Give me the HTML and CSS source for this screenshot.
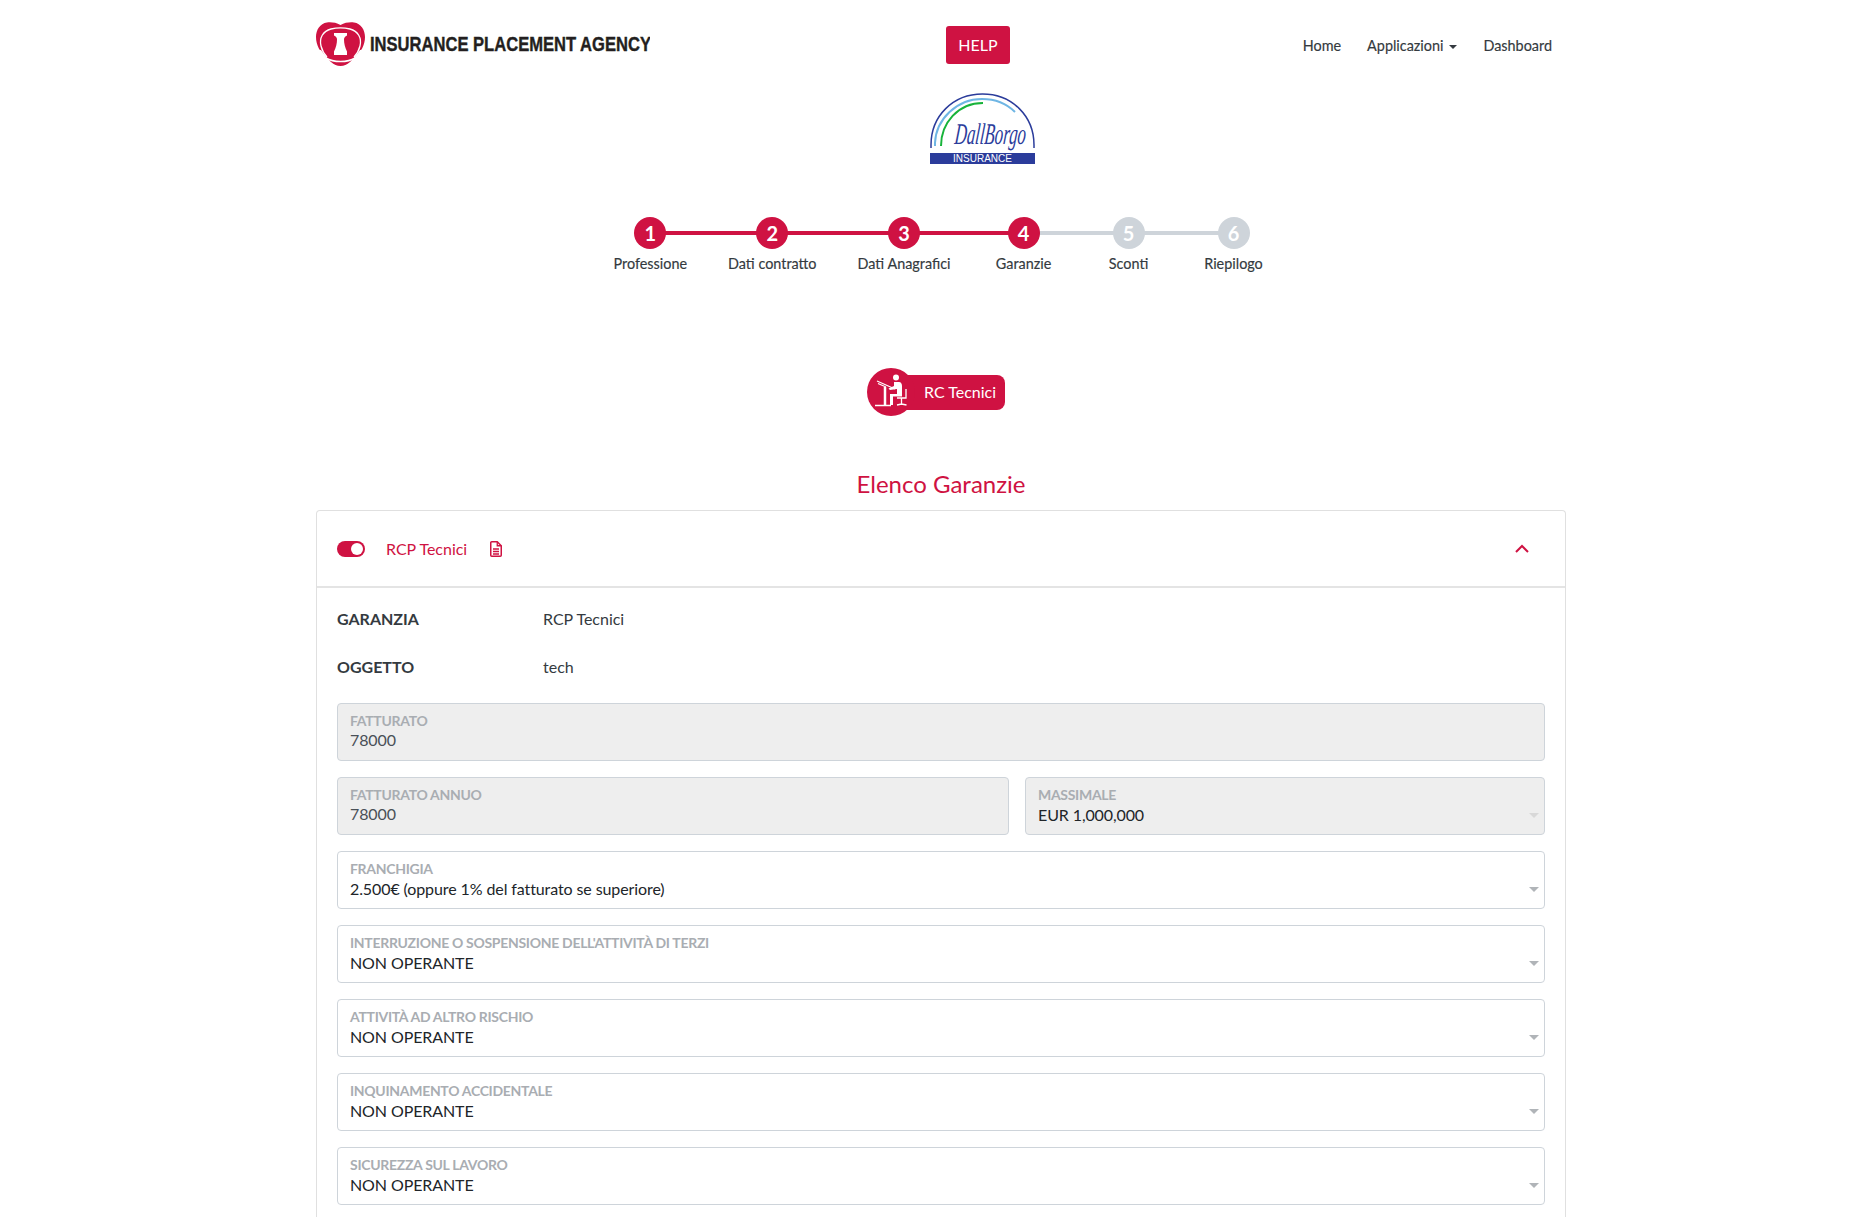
FILE: index.html
```html
<!DOCTYPE html>
<html>
<head>
    <title>Elenco Garanzie</title>
    <link rel="stylesheet" href="styles.css">
</head>
<body>
    <div class="page">
        <nav class="navbar">
            <a class="brand" href="#">
                <svg class="brand-logo" width="334" height="44" viewBox="0 0 334 44">
                    <path fill="#cf1242" d="M24.500 3C20 .5 15 0 11 .5 4 1.500 0 8 0 15c0 8 4 15 10 20l5 5c3 2.500 6 4 9.500 4s6.500-1.500 9.500-4l5-5c6-5 10-12 10-20C49 8 45 1.500 38 .5 34 0 29 .5 24.500 3z"/>
                    <path fill="none" stroke="#fff" stroke-width="1.300" d="M5 24C3 16 7 9 15 7c6-1.500 13-1.500 19 0 8 2 12 9 10 17-1 4-3 8-6 11M5 24c1 4 3 8 6 11"/>
                    <path fill="none" stroke="#fff" stroke-width="1.500" d="M10 36c4 2.500 9 3.500 14.500 3.500S35 38.500 39 36"/>
                    <path fill="#fff" d="M0 28h5l6 8 4 5-3 3H0zM49 28h-5l-6 8-4 5 3 3h12z"/>
                    <path fill="#fff" d="M18 11h13v2.500c-2 1-3 2-3 4 0 4 1 8 3 12V33H18v-3.500c2-4 3-8 3-12 0-2-1-3-3-4z"/>
                    <text class="brand-text" transform="translate(54 29) scale(.789 1)">INSURANCE PLACEMENT AGENCY</text>
                </svg>
            </a>
            <a class="btn-help" href="#">HELP</a>
            <ul class="nav">
                <li><a href="#">Home</a></li>
                <li><a class="dropdown" href="#">Applicazioni</a></li>
                <li><a href="#">Dashboard</a></li>
            </ul>
        </nav>

        <div class="partner">
            <svg width="105" height="71" viewBox="0 0 105 71">
                <path fill="none" stroke="#2b3c9b" stroke-width="1.500" d="M1 55V52C1 23 23 1 52.500 1S104 23 104 52v3"/>
                <path fill="none" stroke="#6fb6e4" stroke-width="2" d="M5 53V50C6 26 27 6 52 6c14 0 25 5 33 13"/>
                <path fill="none" stroke="#17b33a" stroke-width="2" d="M11 53C11 30 28 10 53 10"/>
                <text class="partner-sign" transform="translate(24 51) scale(.56 1) skewX(-10)">DallBorgo</text>
                <rect x="0" y="60" width="105" height="11" fill="#2b3c9b"/>
                <text class="partner-name" x="52.500" y="69" text-anchor="middle">INSURANCE</text>
            </svg>
        </div>

        <div class="stepper">
            <div class="step done"><span class="step-num">1</span><span class="step-label">Professione</span></div>
            <div class="step done"><span class="step-num">2</span><span class="step-label">Dati contratto</span></div>
            <div class="step done"><span class="step-num">3</span><span class="step-label">Dati Anagrafici</span></div>
            <div class="step current"><span class="step-num">4</span><span class="step-label">Garanzie</span></div>
            <div class="step"><span class="step-num">5</span><span class="step-label">Sconti</span></div>
            <div class="step"><span class="step-num">6</span><span class="step-label">Riepilogo</span></div>
        </div>

        <div class="badge-row">
            <div class="badge">
                <span class="badge-icon">
                    <svg width="48" height="48" viewBox="0 0 48 48" fill="none" stroke="#fff">
                        <path stroke-width="1.200" d="M10 13l18 8M11 15.500l8 3.500"/>
                        <path stroke-width="2.500" d="M18 19v18"/>
                        <path stroke-width="1.500" d="M8 37.500h16"/>
                        <circle cx="29" cy="9.500" r="3" fill="#fff" stroke="none"/>
                        <path fill="#fff" stroke="none" d="M27 14h5c2 0 3 2 3 4v10.500h-9V37h-3V26h7v-5l-7 1-1.500-1.500 5.500-2.500z"/>
                        <path stroke-width="1.300" d="M39 21v9h-9M34.500 30v6.500M30 37l4.500-1 5 1"/>
                    </svg>
                </span>
                <span class="badge-text">RC Tecnici</span>
            </div>
        </div>

        <h2 class="section-title">Elenco Garanzie</h2>

        <div class="card">
            <div class="card-header">
                <span class="toggle"></span>
                <span class="card-title">RCP Tecnici</span>
                <svg class="doc-icon" width="12" height="16" viewBox="0 0 12 16" fill="none" stroke="#cf1242" stroke-width="1.500">
                    <path d="M.75 1.750a1 1 0 0 1 1-1h5.500l4 4v9.500a1 1 0 0 1-1 1h-8.500a1 1 0 0 1-1-1z"/>
                    <path d="M7.250 1v3.750h4M3 8h6M3 10.500h6M3 13h6" stroke-width="1.300"/>
                </svg>
                <svg class="chevron" width="14" height="9" viewBox="0 0 14 9" fill="none" stroke="#cf1242" stroke-width="2">
                    <path d="M1 8l6-6 6 6"/>
                </svg>
            </div>
            <div class="card-body">
                <div class="info-row"><span class="info-key">GARANZIA</span><span>RCP Tecnici</span></div>
                <div class="info-row"><span class="info-key">OGGETTO</span><span>tech</span></div>

                <div class="field disabled">
                    <label>FATTURATO</label>
                    <div class="field-value">78000</div>
                </div>
                <div class="field-row">
                    <div class="field disabled">
                        <label>FATTURATO ANNUO</label>
                        <div class="field-value">78000</div>
                    </div>
                    <div class="field disabled select">
                        <label>MASSIMALE</label>
                        <div class="field-value">EUR 1,000,000</div>
                    </div>
                </div>
                <div class="field select">
                    <label>FRANCHIGIA</label>
                    <div class="field-value">2.500€ (oppure 1% del fatturato se superiore)</div>
                </div>
                <div class="field select">
                    <label>INTERRUZIONE O SOSPENSIONE DELL'ATTIVITÀ DI TERZI</label>
                    <div class="field-value">NON OPERANTE</div>
                </div>
                <div class="field select">
                    <label>ATTIVITÀ AD ALTRO RISCHIO</label>
                    <div class="field-value">NON OPERANTE</div>
                </div>
                <div class="field select">
                    <label>INQUINAMENTO ACCIDENTALE</label>
                    <div class="field-value">NON OPERANTE</div>
                </div>
                <div class="field select">
                    <label>SICUREZZA SUL LAVORO</label>
                    <div class="field-value">NON OPERANTE</div>
                </div>
            </div>
        </div>
    </div>
</body>
</html>
```

FILE: styles.css
```css
html, body {
    margin: 0;
    padding: 0;
    background: #fff;
}
body {
    font-family: Lato, "Noto Sans", sans-serif;
    font-size: 16px;
    color: #343a40;
}
a {
    color: inherit;
    text-decoration: none;
}
.page {
    width: 1250px;
    height: 1217px;
    margin-left: 316px;
    overflow: hidden;
}

/* top bar */
.navbar {
    display: flex;
    align-items: center;
    justify-content: space-between;
    height: 88px;
}
.brand {
    display: block;
    height: 44px;
    margin-right: 16px;
}
.brand-text {
    font-family: "Liberation Sans", sans-serif;
    font-size: 21px;
    font-weight: bold;
    fill: #231f20;
    stroke: #231f20;
    stroke-width: .4px;
}
.btn-help {
    margin-top: 2px;
    padding: 0 12px;
    height: 38px;
    line-height: 38px;
    background: #cf1242;
    color: #fff;
    border-radius: 3px;
}
.nav {
    display: flex;
    list-style: none;
    margin: 2px 1px 0 0;
    padding: 0;
    font-size: 14.4px;
    -webkit-text-stroke: .15px #343a40;
}
.nav a {
    display: block;
    padding: 0 13px;
}
.dropdown::after {
    content: "";
    display: inline-block;
    margin-left: 6px;
    vertical-align: 2px;
    border-top: 4px solid #343a40;
    border-left: 4px solid transparent;
    border-right: 4px solid transparent;
}

/* partner logo */
.partner {
    margin: 5px 0 0 614px;
    height: 70px;
}
.partner svg {
    display: block;
}
.partner-sign {
    font-family: "Liberation Serif", serif;
    font-style: italic;
    font-size: 30px;
    fill: #2b3c9b;
}
.partner-name {
    font-family: "Liberation Sans", sans-serif;
    font-size: 10px;
    fill: #fff;
}

/* stepper */
.stepper {
    display: flex;
    justify-content: center;
    gap: 41px;
    margin: 54px 3px 0 0;
    font-size: 14.4px;
}
.step {
    position: relative;
    display: flex;
    flex-direction: column;
    align-items: center;
    min-width: 64px;
}
.step-num {
    position: relative;
    z-index: 1;
    width: 32px;
    height: 32px;
    line-height: 32px;
    text-align: center;
    border-radius: 50%;
    background: #ced4da;
    color: #fff;
    font-size: 20px;
    font-weight: 700;
}
.step-label {
    margin-top: 5px;
    line-height: 20px;
    -webkit-text-stroke: .15px #343a40;
}
/* connector: each step draws its half towards the neighbours */
.step::before, .step::after {
    content: "";
    position: absolute;
    top: 14px;
    height: 4px;
    background: #ced4da;
}
.step::before {
    left: 0;
    right: 50%;
}
.step::after {
    left: 50%;
    right: -41px;
}
.step:first-child::before, .step:last-child::after {
    display: none;
}
.step.done::before, .step.done::after, .step.current::before {
    background: #cf1242;
}
.step.done .step-num, .step.current .step-num {
    background: #cf1242;
}

/* section badge */
.badge-row {
    display: flex;
    justify-content: center;
    margin-top: 94px;
}
.badge {
    display: flex;
    align-items: center;
    height: 48px;
    margin-right: 10px;
}
.badge-icon {
    position: relative;
    z-index: 1;
    width: 48px;
    height: 48px;
    border-radius: 50%;
    background: #cf1242;
}
.badge-text {
    height: 35px;
    line-height: 33px;
    margin-left: -10px;
    padding: 0 9px 0 19px;
    background: #cf1242;
    color: #fff;
    border-radius: 0 8px 8px 0;
}

.section-title {
    margin: 48px 0 0;
    text-align: center;
    font-size: 24px;
    font-weight: 400;
    line-height: 40px;
    color: #cf1242;
}

/* garanzia card */
.card {
    margin-top: 6px;
    border: 1px solid #e0e0e0;
    border-bottom: 0;
    border-radius: 4px 4px 0 0;
}
.card-header {
    display: flex;
    align-items: center;
    height: 75px;
    padding: 0 36px 0 20px;
    border-bottom: 2px solid #e4e4e4;
    color: #cf1242;
}
.toggle {
    position: relative;
    width: 28px;
    height: 16px;
    border-radius: 8px;
    background: #cf1242;
}
.toggle::after {
    content: "";
    position: absolute;
    top: 2px;
    right: 2px;
    width: 12px;
    height: 12px;
    border-radius: 50%;
    background: #fff;
}
.card-title {
    margin-left: 21px;
}
.doc-icon {
    margin-left: 23px;
}
.chevron {
    margin-left: auto;
}
.card-body {
    padding: 6px 20px 20px;
}
.info-row {
    display: flex;
    align-items: center;
    height: 48px;
}
.info-key {
    width: 206px;
    font-weight: 700;
}

/* form fields */
.field {
    position: relative;
    flex: 1;
    box-sizing: border-box;
    height: 58px;
    margin-top: 16px;
    padding: 8px 12px 0;
    border: 1px solid #ced4da;
    border-radius: 4px;
    background: #fff;
}
.card-body > .info-row + .field {
    margin-top: 13px;
}
.field.disabled {
    background: #eee;
}
.field label {
    display: block;
    margin-bottom: 2px;
    font-size: 14px;
    font-weight: 700;
    line-height: 17px;
    letter-spacing: -.3px;
    color: #a9adb2;
}
.field-value {
    line-height: 20px;
    letter-spacing: -.1px;
    color: #212529;
}
.field.disabled:not(.select) .field-value {
    margin-top: -1px;
    color: #495057;
}
.field-row {
    display: flex;
    gap: 16px;
}
.field-row .field:first-child {
    flex: 0 0 672px;
}
.field.select::after {
    content: "";
    position: absolute;
    right: 5px;
    top: 35px;
    border-top: 5px solid #b0b4b8;
    border-left: 5px solid transparent;
    border-right: 5px solid transparent;
}
.field.disabled.select::after {
    border-top-color: #d8d8d8;
}
```
